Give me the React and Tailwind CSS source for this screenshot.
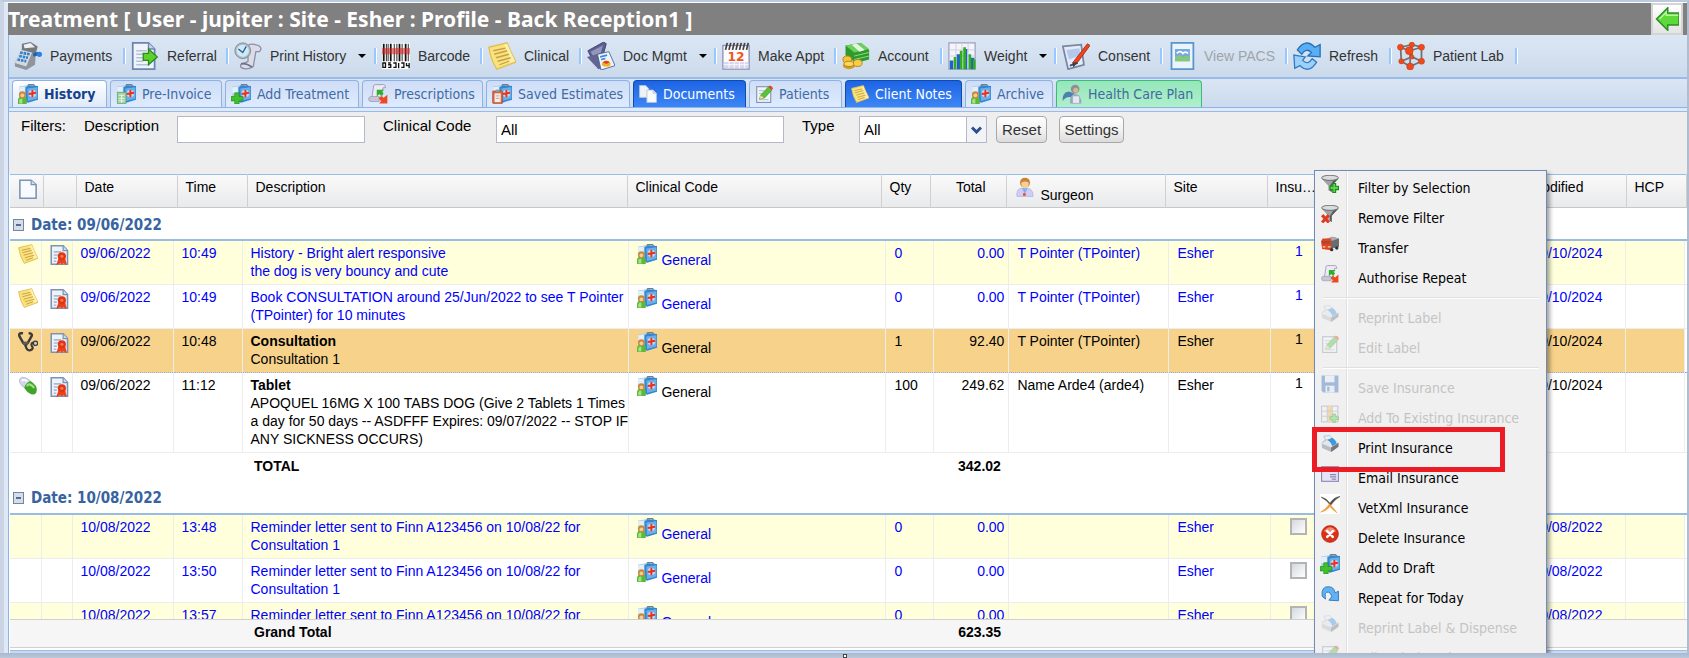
import { useState } from "react";

/* ─── Icons ─── */

function Svg({ size = 20, className = "", children }) {
  return (
    <svg
      xmlns="http://www.w3.org/2000/svg"
      viewBox="0 0 32 32"
      width={size}
      height={size}
      fill="none"
      aria-hidden="true"
      className={`shrink-0 ${className}`}
    >
      {children}
    </svg>
  );
}

// Blue first-aid case, used with a different overlay on most tabs
function CaseIcon({ size, className, overlay = "person" }) {
  return (
    <Svg size={size} className={className}>
      <path d="M15 4 L17 1 H25 L27 4" stroke="#6f7f92" strokeWidth="2" />
      <path d="M2 4 L15 2 V27 L2 26 Z" fill="#a9cdea" />
      <path d="M2 5 L11 4 V14 L2 15 Z" fill="#e3f0fa" />
      <path d="M12 5 L18 2 L32 3 V25 L16 30 L12 28 Z" fill="#3486cf" />
      <path d="M15 7 L31 5 V23 L16 27 Z" fill="#68b0ea" />
      <circle cx="23" cy="15" r="6" fill="#b8dbf6" />
      <path d="M23 9 V21 M17 16 L29 14" stroke="#ee2f1c" strokeWidth="3" />
      {overlay === "person" && (
        <>
          <path d="M0 32 V25 Q1 20 7 20 Q14 20 14 26 V32 Z" fill="#5cb83c" />
          <path d="M2 31 V26 Q4 22 7 24 V31 Z" fill="#a5e27c" />
          <circle cx="7" cy="17" r="5.5" fill="#c98a3c" />
          <circle cx="7" cy="18" r="3" fill="#f3cf96" />
        </>
      )}
      {overlay === "plus" && (
        <path
          d="M6 14 H13 V20 H19 V27 H13 V32 H6 V27 H0 V20 H6 Z"
          fill="#3fc02c" stroke="#1e8a18" strokeWidth="1"
        />
      )}
      {overlay === "sheet" && (
        <>
          <rect x="2" y="13" width="14" height="18" fill="#9fd0a0" stroke="#4f9a62" />
          <path d="M4 18 H14 M4 23 H14 M4 27 H14 M9 17 V30" stroke="#e9f8e8" strokeWidth="1.5" />
        </>
      )}
      {overlay === "clip" && (
        <>
          <rect x="1" y="11" width="16" height="20" rx="1" fill="#d9633f" stroke="#a8452a" />
          <rect x="4" y="15" width="10" height="14" fill="#f6ece6" />
          <rect x="6" y="9" width="6" height="4" fill="#8e98a6" />
          <path d="M6 19 H12 M6 23 H12" stroke="#b9a49a" strokeWidth="1.5" />
        </>
      )}
    </Svg>
  );
}

function NoteIcon({ size }) {
  return (
    <Svg size={size}>
      <path d="M1 6 L22 1 Q25 10 32 23 L10 31 Q3 20 1 6 Z" fill="#fbe27a" stroke="#dfbf58" strokeWidth="1.5" />
      <path d="M22 2 Q25 10 31 22 L25 24 Q24 12 18 3 Z" fill="#fdf0a8" />
      <path d="M6 10 L20 7 M7 14 L22 10 M9 18 L24 14 M11 22 L26 18 M13 26 L24 22" stroke="#c4a04c" strokeWidth="1.5" />
    </Svg>
  );
}

function PageIcon({ size }) {
  return (
    <Svg size={size}>
      <path d="M3 2 H21 L29 9 V31 H3 Z" fill="#f7fafe" stroke="#7d93b2" strokeWidth="2.5" />
      <path d="M21 2 V9 H29" fill="#cfdcec" stroke="#7d93b2" strokeWidth="2" />
    </Svg>
  );
}

function CertificateIcon({ size }) {
  return (
    <Svg size={size}>
      <path d="M2 1 H21 L28 9 V31 H2 Z" fill="#eef3fa" stroke="#7d93b2" strokeWidth="2.5" />
      <path d="M21 1 V9 H28" fill="#cfdcec" stroke="#7d93b2" strokeWidth="2" />
      <path d="M6 11 H18 M6 16 H13 M6 21 H11 M6 26 H10" stroke="#a9bad0" strokeWidth="2.5" />
      <path d="M14 20 L10 32 L17 29 L19 32 L21 29 L27 32 L24 20 Z" fill="#e8431c" />
      <circle cx="19" cy="18" r="6.5" fill="#e23514" />
      <circle cx="19" cy="18" r="2.5" fill="#ff7a4c" />
    </Svg>
  );
}

function StethoscopeIcon({ size }) {
  return (
    <Svg size={size}>
      <path
        d="M8 2 Q1 1 2 6 L8 17 Q12 22 16 17 L22 6 Q23 2 17 2"
        stroke="#3d3b38" strokeWidth="4"
      />
      <path d="M7 16 Q12 14 17 16 L14 24 H11 Z" fill="#5c5c5c" />
      <path d="M12 20 Q13 31 20 29 Q26 27 22 22 Q20 17 26 17" stroke="#3d3b38" strokeWidth="3.5" />
      <circle cx="28" cy="18" r="3.5" fill="#c8ccd0" stroke="#3d3b38" strokeWidth="2" />
    </Svg>
  );
}

function PillIcon({ size }) {
  return (
    <Svg size={size}>
      <path d="M3 11 Q0 3 8 2 Q13 2 20 8 L11 19 Q5 16 3 11 Z" fill="#d4d6ee" stroke="#a5a8c8" />
      <path d="M20 8 Q31 15 30 23 Q29 31 21 29 Q14 26 10 19 Q12 11 20 8 Z" fill="#3fa32c" />
      <path d="M15 15 Q19 11 25 18" stroke="#9ce27e" strokeWidth="3.5" strokeLinecap="round" />
      <path d="M7 7 Q10 5 14 8" stroke="#fff" strokeWidth="3" strokeLinecap="round" />
    </Svg>
  );
}

function DoctorIcon({ size }) {
  return (
    <Svg size={size}>
      <path d="M3 31 Q2 19 10 18 H20 Q29 19 29 31 Z" fill="#cfcff4" stroke="#a9a9dc" />
      <path d="M11 18 L16 27 L20 18 Z" fill="#7fb1ea" />
      <rect x="13" y="26" width="4" height="4" fill="#e8431c" />
      <circle cx="16" cy="9" r="8" fill="#c98432" />
      <path d="M10 9 Q16 5 22 9 Q22 18 16 18 Q10 17 10 9 Z" fill="#f6cf9c" />
    </Svg>
  );
}

function PrescriptionIcon({ size }) {
  return (
    <Svg size={size}>
      <path d="M9 3 Q9 1 12 1 H25 Q28 1 28 6 H24 L22 22 H6 Z" fill="#eceaf6" stroke="#9c9cb4" strokeWidth="1.5" />
      <path d="M1 24 Q1 20 5 20 H18 V28 H5 Q1 28 1 24 Z" fill="#c6c6d8" stroke="#8f8fa8" />
      <path d="M14 20 V9 H26 L22 12 L25 15 L21 19 L18 16 Z" fill="#2fae2a" />
      <path d="M31 17 V31 H18 L21 27 L17 23 L21 19 L25 22 Z" fill="#ee4a22" />
    </Svg>
  );
}

function EditIcon({ size }) {
  return (
    <Svg size={size}>
      <rect x="3" y="3" width="25" height="28" fill="#f2f5fa" stroke="#8494ac" strokeWidth="2" />
      <path d="M7 10 H17 M7 15 H14 M7 26 H24" stroke="#b9c6d8" strokeWidth="2" />
      <path d="M8 25 L10 18 L24 3 L30 9 L17 23 Z" fill="#58c23a" stroke="#36862a" />
      <path d="M8 25 L10 18 L16 23 Z" fill="#f2d9a0" />
      <path d="M24 4 L26 1 Q31 2 32 6 L30 9 Z" fill="#e0452c" />
    </Svg>
  );
}

function DocumentsIcon({ size }) {
  return (
    <Svg size={size}>
      <path d="M1 1 H12 L17 6 V22 H1 Z" fill="#eef3f8" stroke="#b7c4d4" strokeWidth="1.5" />
      <path d="M14 9 H25 L31 15 V31 H14 Z" fill="#f8fafc" stroke="#b7c4d4" strokeWidth="1.5" />
      <path d="M25 9 V15 H31" fill="#cdd9e6" stroke="#b7c4d4" />
    </Svg>
  );
}

function HealthPlanIcon({ size }) {
  return (
    <Svg size={size}>
      <path d="M1 27 Q0 13 11 12 L20 15 L14 21 Q7 19 1 27 Z" fill="#4f7fae" />
      <circle cx="21" cy="8" r="7" fill="#8c9099" />
      <circle cx="22" cy="10" r="4" fill="#d9b48c" />
      <path d="M13 31 Q12 17 21 16 Q31 17 31 31 Z" fill="#97a6be" />
      <path d="M17 19 H28 V31 H17 Z" fill="#e3e8f2" stroke="#9aa7bd" />
    </Svg>
  );
}

function PaymentsIcon({ size }) {
  return (
    <Svg size={size}>
      <path d="M1 24 L9 8 L25 11 L24 26 L14 32 L1 28 Z" fill="#8f959c" />
      <path d="M1 24 L9 8 L21 11 L14 28 Z" fill="#d5d9de" />
      <path d="M9 2 L19 0 L27 5 L25 13 L9 9 Z" fill="#74797f" />
      <path d="M11 3 L19 1 L24 6 L12 7 Z" fill="#eef0f2" />
      <path d="M7 12 L18 14 M6 16 L16 18 M4 20 L14 22" stroke="#2f7fd0" strokeWidth="3" strokeDasharray="3 1" />
      <path d="M22 15 L28 13" stroke="#1f62a8" strokeWidth="4" />
      <circle cx="29" cy="14" r="3" fill="#2b82dc" />
    </Svg>
  );
}

function ReferralIcon({ size }) {
  return (
    <Svg size={size}>
      <path d="M2 1 H20 L27 8 V31 H2 Z" fill="#f0f4fa" stroke="#6b84b4" strokeWidth="2" />
      <path d="M20 1 V8 H27" fill="#c9d6ea" stroke="#6b84b4" strokeWidth="1.5" />
      <path d="M6 10 H18 M6 14 H14 M6 18 H14 M6 22 H14 M6 26 H21" stroke="#b3c2d8" strokeWidth="1.5" />
      <path d="M14 13 H20 V8 L30 17 L20 26 V21 H14 Z" fill="#5cd02c" stroke="#2a8a1e" strokeWidth="1.5" />
    </Svg>
  );
}

function PrintHistoryIcon({ size }) {
  return (
    <Svg size={size}>
      <path d="M16 4 Q20 1 28 4 Q33 7 29 11 L25 11 L22 28 Q14 33 8 29 Q6 25 12 24 L16 22 Z" fill="#dcdce8" stroke="#8d8fa6" strokeWidth="1.5" />
      <path d="M8 25 Q14 24 21 29" stroke="#6f7188" strokeWidth="2" />
      <circle cx="10" cy="10" r="9" fill="#b4bac4" stroke="#7d838e" />
      <circle cx="10" cy="10" r="7" fill="#cdeafa" />
      <path d="M5 8 L10 12 L14 5" stroke="#2b5f8c" strokeWidth="1.5" />
    </Svg>
  );
}

function BarcodeIcon({ size }) {
  return (
    <Svg size={size}>
      <rect x="0" y="1" width="32" height="30" fill="#fff" />
      <path d="M2 2 V22 M10 2 V22 M20 2 V22 M27 2 V22" stroke="#111" strokeWidth="2" />
      <path d="M5 2 V22 M7 2 V22 M14 2 V22 M17 2 V22 M23 2 V22 M30 2 V22" stroke="#111" strokeWidth="1" />
      <rect x="0" y="7" width="32" height="7" fill="#e02020" opacity="0.55" />
      <path d="M1 24 H4 V29 H1 Z M7 24 H10 M7 26 H10 V29 H7 M13 24 H16 V29 H13 M19 24 V30 M22 24 H25 V29 H22 M28 24 V27 H31 M31 24 V30" stroke="#111" strokeWidth="1.5" />
    </Svg>
  );
}

function ScannerIcon({ size }) {
  return (
    <Svg size={size}>
      <path d="M1 10 L19 0 L22 2 L19 13 L5 18 Z" fill="#5c5f94" stroke="#3c3f6c" />
      <path d="M4 11 L18 4 L16 12 L7 16 Z" fill="#9496bc" />
      <path d="M0 17 L18 12 L31 25 L13 31 Z" fill="#62658f" />
      <path d="M12 14 L25 11 L32 27 L16 32 Z" fill="#eef4fc" stroke="#4d6090" />
      <path d="M15 17 L23 15 M16 20 L21 19" stroke="#3f8ad8" strokeWidth="2" />
      <ellipse cx="22" cy="25" rx="5" ry="3" fill="#f4b01e" />
      <path d="M22 25 L18 23 Q22 20 26 23 Z" fill="#e2411e" />
    </Svg>
  );
}

function CalendarIcon({ size }) {
  return (
    <Svg size={size}>
      <rect x="1" y="4" width="30" height="27" fill="#fdfdff" stroke="#8f8fb8" strokeWidth="1.5" />
      <path d="M2 23 H30 V30 H2 Z" fill="#d5d5ee" />
      <path d="M2 26 H30 M8 23 V30 M14 23 V30 M20 23 V30 M26 23 V30" stroke="#fff" />
      <path
        d="M4 9 L6 1 M8 9 L10 1 M12 9 L14 1 M16 9 L18 1 M20 9 L22 1 M24 9 L26 1 M28 9 L30 1"
        stroke="#444" strokeWidth="2"
      />
      <text x="16" y="22" textAnchor="middle" fill="#f0561c" fontSize="14" fontWeight="bold" fontFamily="DejaVu Sans, sans-serif">
        12
      </text>
    </Svg>
  );
}

function MoneyIcon({ size }) {
  return (
    <Svg size={size}>
      <path d="M4 4 L22 1 L31 9 V20 L16 24 L4 15 Z" fill="#2f9a2c" />
      <path d="M4 4 L22 1 L31 8 L14 12 Z" fill="#6ad25c" />
      <path d="M11 3 L17 2 L26 9 L20 11 Z" fill="#e6f4e0" />
      <path d="M14 16 L31 12 M14 20 L31 16" stroke="#9be08c" />
      <ellipse cx="8" cy="27" rx="7" ry="4" fill="#d79a1c" />
      <ellipse cx="6" cy="20" rx="5" ry="4" fill="#f2c437" stroke="#b57f14" />
      <ellipse cx="8" cy="25" rx="6" ry="3" fill="#f8d860" stroke="#b57f14" />
      <ellipse cx="18" cy="24" rx="5" ry="4" fill="#f6cc48" stroke="#b57f14" />
    </Svg>
  );
}

function ChartIcon({ size }) {
  return (
    <Svg size={size}>
      <rect x="1" y="1" width="30" height="30" fill="#f4f4fa" stroke="#a4a4c0" strokeWidth="1.5" />
      <path d="M1 9 H31 M1 16 H31 M1 23 H31 M9 1 V31 M16 1 V31 M23 1 V31" stroke="#cdcde0" />
      <path d="M4 31 V21 M12 31 V14 M20 31 V8 M28 31 V18" stroke="#1f62c8" strokeWidth="4" />
      <path d="M8 31 V17 M15 31 V10 M19 31 V6 M25 31 V14 M30 31 V20" stroke="#2fae1e" strokeWidth="3" />
    </Svg>
  );
}

function ConsentIcon({ size }) {
  return (
    <Svg size={size}>
      <path d="M1 5 L22 3 L25 26 L7 31 Z" fill="#e4ebf8" stroke="#7784a4" strokeWidth="2" />
      <path d="M5 9 L20 7 L21 15 L8 20 Z" fill="#b4c8ec" />
      <path d="M9 27 L18 24" stroke="#3c4460" strokeWidth="2" />
      <path d="M12 24 L29 2 L32 4 L18 23 Z" fill="#ee4422" stroke="#a82c14" />
      <path d="M12 24 L13 29 L18 23 Z" fill="#3c3c44" />
    </Svg>
  );
}

function PictureIcon({ size }) {
  return (
    <Svg size={size}>
      <rect x="4" y="1" width="25" height="30" fill="#eaf4fd" stroke="#5b93cc" strokeWidth="2" />
      <rect x="8" y="8" width="17" height="14" fill="#78a8e0" />
      <path d="M8 22 V17 Q13 13 17 17 Q21 15 25 17 V22 Z" fill="#86c878" />
      <path d="M10 13 Q14 9 17 13 Q20 10 23 13" stroke="#fff" strokeWidth="2" />
    </Svg>
  );
}

function RefreshIcon({ size }) {
  return (
    <Svg size={size}>
      <path d="M5 9 Q14 -5 25 6 L31 3 V17 L17 16 L21 12 Q15 6 10 14 Z" fill="#5aaef4" stroke="#2670b8" strokeWidth="1.5" />
      <path d="M27 23 Q18 37 8 27 L2 30 L1 15 L14 17 L11 21 Q17 27 22 19 Z" fill="#9cd0f8" stroke="#2f7cc4" strokeWidth="1.5" />
    </Svg>
  );
}

function LabIcon({ size }) {
  return (
    <Svg size={size}>
      <path
        d="M4 6 L17 3 L28 6 V22 L15 28 L5 22 Z M4 6 L14 10 L28 6 M15 10 V28 M17 3 V17 L5 22 M17 17 L28 22"
        stroke="#6c7278" strokeWidth="2"
      />
      <g fill="#f04a1c" stroke="#b8300c" strokeWidth="0.5">
        <circle cx="4" cy="6" r="3.5" /><circle cx="17" cy="3" r="3" /><circle cx="28" cy="6" r="3.5" />
        <circle cx="14" cy="10" r="4.5" /><circle cx="17" cy="17" r="2.5" /><circle cx="5" cy="22" r="3" />
        <circle cx="28" cy="22" r="3.5" /><circle cx="15" cy="28" r="4" />
      </g>
    </Svg>
  );
}

function BackArrowIcon({ size }) {
  return (
    <Svg size={size}>
      <path d="M2 16 L17 1 V8 H32 V24 H17 V31 Z" fill="#5fd83a" stroke="#2c8f24" strokeWidth="2" />
      <path d="M6 16 L15 7 V11 H31" stroke="#b6f59c" strokeWidth="2" />
    </Svg>
  );
}

function FilterIcon({ size, remove }) {
  return (
    <Svg size={size}>
      <path d="M1 6 L13 19 V27 L19 30 V19 L31 6 Z" fill="#a0a3a6" />
      <path d="M16 19 L22 10 L31 6 L19 19 V30 L16 28 Z" fill="#55585b" />
      <ellipse cx="16" cy="5" rx="15" ry="4.5" fill="#d9dbdd" stroke="#606366" strokeWidth="1.5" />
      {remove ? (
        <path d="M2 18 L14 31 M14 18 L2 31" stroke="#e23a1e" strokeWidth="5.5" />
      ) : (
        <path d="M21 15 H26 V20 H31 V26 H26 V31 H21 V26 H16 V20 H21 Z" fill="#58d844" stroke="#1c8a1a" strokeWidth="2" />
      )}
    </Svg>
  );
}

function TruckIcon({ size }) {
  return (
    <Svg size={size}>
      <path d="M10 7 L20 3 L32 6 V21 L16 25 Z" fill="#6a6d70" />
      <path d="M10 7 L20 3 L32 6 L20 10 Z" fill="#a9acb0" />
      <path d="M0 11 L3 6 H18 V27 L2 25 Z" fill="#e2431f" />
      <path d="M2 11 H16 V15 H2 Z" fill="#9f4a38" />
      <path d="M3 21 H8 M12 21 H17" stroke="#fbd6a0" strokeWidth="2" />
      <circle cx="19" cy="26" r="3" fill="#333" /><circle cx="28" cy="23" r="3" fill="#333" />
    </Svg>
  );
}

function PrinterIcon({ size }) {
  return (
    <Svg size={size}>
      <path d="M5 2 L16 1 L23 9 L10 14 Z" fill="#e8f2fc" stroke="#92a8c0" />
      <path d="M1 14 Q6 7 14 7 L31 13 V21 L18 30 L2 23 Z" fill="#b9bdc3" />
      <path d="M1 15 L13 7 L31 13 L18 22 Z" fill="#e4e6e9" />
      <path d="M11 9 L20 5 Q26 8 28 15 L20 20 Q18 12 11 9 Z" fill="#3f97dc" />
      <path d="M18 22 L31 14 V21 L18 30 Z" fill="#74787e" />
    </Svg>
  );
}

function SaveIcon({ size }) {
  return (
    <Svg size={size}>
      <path d="M1 1 H31 V31 H4 L1 28 Z" fill="#2f6cb8" />
      <rect x="7" y="1" width="17" height="12" fill="#e4edf7" />
      <rect x="8" y="19" width="16" height="12" fill="#dfe8f2" />
      <rect x="11" y="21" width="4" height="8" fill="#2f6cb8" />
    </Svg>
  );
}

function TableAddIcon({ size }) {
  return (
    <Svg size={size}>
      <rect x="1" y="2" width="29" height="28" fill="#f4f4f8" stroke="#8f95a4" strokeWidth="2" />
      <rect x="11" y="2" width="9" height="28" fill="#f2b84c" />
      <path d="M1 11 H30 M1 20 H30 M11 2 V30 M20 2 V30" stroke="#8f95a4" strokeWidth="1.5" />
      <path d="M21 16 H26 V21 H31 V26 H26 V31 H21 V26 H16 V21 H21 Z" fill="#58d844" stroke="#1c8a1a" strokeWidth="1.5" />
    </Svg>
  );
}

function MailIcon({ size }) {
  return (
    <Svg size={size}>
      <rect x="1" y="3" width="30" height="26" fill="#e6e3f8" stroke="#8d88b8" strokeWidth="2" />
      <path d="M20 12 L25 6 L29 12 Z" fill="#2fae2a" />
      <path d="M16 17 H27 M16 21 H27 M19 25 H27" stroke="#8d88a8" strokeWidth="2" />
    </Svg>
  );
}

function VetXmlIcon({ size }) {
  return (
    <Svg size={size}>
      <rect width="32" height="32" fill="#fff" />
      <path d="M2 5 Q10 6 16 15 Q22 5 32 4 Q24 8 17 18 Q10 9 2 5 Z" fill="#4c4a44" stroke="#4c4a44" />
      <path d="M1 29 Q9 25 15 16 Q20 20 27 30 Q20 25 16 20 Q9 28 1 29 Z" fill="#f09a34" stroke="#f09a34" />
    </Svg>
  );
}

function DeleteIcon({ size }) {
  return (
    <Svg size={size}>
      <circle cx="16" cy="16" r="15" fill="#dc3018" stroke="#a41c0c" />
      <path d="M5 11 Q16 -3 27 11 Q16 16 5 11 Z" fill="#f48a74" />
      <path d="M11 11 L21 21 M21 11 L11 21" stroke="#fff" strokeWidth="4.5" strokeLinecap="round" />
    </Svg>
  );
}

function RepeatIcon({ size }) {
  return (
    <Svg size={size}>
      <path d="M2 20 Q0 2 14 3 Q24 4 25 14 L31 11 V28 L14 27 L19 21 Q17 11 10 13 Q6 15 8 25 Z" fill="#62b2f2" stroke="#2670b8" strokeWidth="1.5" />
    </Svg>
  );
}

/* ─── Data ─── */

const TOOLS = [
  { label: "Payments", icon: PaymentsIcon, width: "w-[117px]" },
  { label: "Referral", icon: ReferralIcon, width: "w-[103px]" },
  { label: "Print History", icon: PrintHistoryIcon, width: "w-[148px]", menu: true },
  { label: "Barcode", icon: BarcodeIcon, width: "w-[106px]" },
  { label: "Clinical", icon: NoteIcon, width: "w-[99px]" },
  { label: "Doc Mgmt", icon: ScannerIcon, width: "w-[135px]", menu: true },
  { label: "Make Appt", icon: CalendarIcon, width: "w-[120px]" },
  { label: "Account", icon: MoneyIcon, width: "w-[106px]" },
  { label: "Weight", icon: ChartIcon, width: "w-[114px]", menu: true },
  { label: "Consent", icon: ConsentIcon, width: "w-[106px]" },
  { label: "View PACS", icon: PictureIcon, width: "w-[125px]", disabled: true },
  { label: "Refresh", icon: RefreshIcon, width: "w-[104px]" },
  { label: "Patient Lab", icon: LabIcon, width: "w-[126px]" },
];

const TABS = [
  { label: "History", icon: <CaseIcon size={20} />, width: "w-[95px]" },
  { label: "Pre-Invoice", icon: <CaseIcon size={20} overlay="sheet" />, width: "w-[112px]" },
  { label: "Add Treatment", icon: <CaseIcon size={20} overlay="plus" />, width: "w-[134px]" },
  { label: "Prescriptions", icon: <PrescriptionIcon size={20} />, width: "w-[121px]" },
  { label: "Saved Estimates", icon: <CaseIcon size={20} overlay="clip" />, width: "w-[144px]" },
  { label: "Documents", icon: <DocumentsIcon size={18} />, width: "w-[113px]", tone: "blue" },
  { label: "Patients", icon: <EditIcon size={18} />, width: "w-[93px]" },
  { label: "Client Notes", icon: <NoteIcon size={18} />, width: "w-[117px]", tone: "blue" },
  { label: "Archive", icon: <CaseIcon size={20} />, width: "w-[88px]" },
  { label: "Health Care Plan", icon: <HealthPlanIcon size={20} />, width: "w-[146px]", tone: "green" },
];

const TAB_TONES = {
  active: "border-[#8db2e3] bg-linear-to-b from-white to-[#dfe9f7] font-bold text-[#15428b]",
  plain: "border-[#8db2e3] bg-linear-to-b from-[#cfdef6] to-[#deebff] text-[#416aa3]",
  blue: "border-[#0f4cae] bg-linear-to-b from-[#1c64e4] to-[#3d86f6] text-white",
  green: "border-[#3dba78] bg-linear-to-b from-[#96e6ba] to-[#aef0cb] text-[#416aa3]",
};

const GROUPS = [
  {
    date: "09/06/2022",
    total: "342.02",
    rows: [
      { type: "note", time: "10:49", text: "History - Bright alert responsive\nthe dog is very bouncy and cute", qty: "0", total: "0.00", surgeon: "T Pointer (TPointer)", modified: "09/10/2024", blue: true },
      { type: "note", time: "10:49", text: "Book CONSULTATION around 25/Jun/2022 to see T Pointer\n(TPointer) for 10 minutes", qty: "0", total: "0.00", surgeon: "T Pointer (TPointer)", modified: "09/10/2024", blue: true },
      { type: "consult", time: "10:48", title: "Consultation", text: "Consultation 1", qty: "1", total: "92.40", surgeon: "T Pointer (TPointer)", modified: "09/10/2024", selected: true },
      { type: "tablet", time: "11:12", title: "Tablet", text: "APOQUEL 16MG X 100 TABS DOG (Give 2 Tablets 1 Times\na day for 50 days -- ASDFFF Expires: 09/07/2022 -- STOP IF\nANY SICKNESS OCCURS)", qty: "100", total: "249.62", surgeon: "Name Arde4 (arde4)", modified: "09/10/2024" },
    ],
  },
  {
    date: "10/08/2022",
    rows: [
      { time: "13:48", text: "Reminder letter sent to Finn A123456 on 10/08/22 for\nConsultation 1", qty: "0", total: "0.00", modified: "10/08/2022", blue: true },
      { time: "13:50", text: "Reminder letter sent to Finn A123456 on 10/08/22 for\nConsultation 1", qty: "0", total: "0.00", modified: "10/08/2022", blue: true },
      { time: "13:57", text: "Reminder letter sent to Finn A123456 on 10/08/22 for\nConsultation 1", qty: "0", total: "0.00", modified: "10/08/2022", blue: true },
    ],
  },
];

const ROW_ICONS = { note: NoteIcon, consult: StethoscopeIcon, tablet: PillIcon };

const MENU = [
  { label: "Filter by Selection", icon: <FilterIcon size={18} /> },
  { label: "Remove Filter", icon: <FilterIcon size={18} remove /> },
  { label: "Transfer", icon: <TruckIcon size={18} /> },
  { label: "Authorise Repeat", icon: <PrescriptionIcon size={18} /> },
  null,
  { label: "Reprint Label", icon: <PrinterIcon size={18} />, disabled: true },
  { label: "Edit Label", icon: <EditIcon size={18} />, disabled: true },
  null,
  { label: "Save Insurance", icon: <SaveIcon size={18} />, disabled: true },
  { label: "Add To Existing Insurance", icon: <TableAddIcon size={18} />, disabled: true },
  { label: "Print Insurance", icon: <PrinterIcon size={18} />, marked: true },
  { label: "Email Insurance", icon: <MailIcon size={18} /> },
  { label: "VetXml Insurance", icon: <VetXmlIcon size={20} /> },
  { label: "Delete Insurance", icon: <DeleteIcon size={18} /> },
  { label: "Add to Draft", icon: <CaseIcon size={20} overlay="plus" /> },
  { label: "Repeat for Today", icon: <RepeatIcon size={18} /> },
  { label: "Reprint Label & Dispense", icon: <PrinterIcon size={18} />, disabled: true },
  { label: "Edit Label & Dispense", icon: <EditIcon size={18} />, disabled: true },
];

/* ─── Toolbar and tabs ─── */

function Toolbar() {
  return (
    <div className="flex h-[42px] items-center bg-linear-to-b from-[#dce7f4] to-[#cbdaec]">
      {TOOLS.map(({ label, icon: Icon, width, menu, disabled }) => (
        <div key={label} className={`flex shrink-0 items-center ${width}`}>
          <button
            type="button"
            disabled={disabled}
            className={`flex flex-1 items-center gap-2 pl-[5px] whitespace-nowrap ${disabled ? "text-[#a0a4aa]" : "text-[#333]"}`}
          >
            <Icon size={28} />
            {label}
            {menu && <span className="ml-1 border-x-4 border-t-4 border-x-transparent border-t-black" />}
          </button>
          <span className="h-4 w-[3px] border-l-2 border-[#98c8ff] bg-white" />
        </div>
      ))}
    </div>
  );
}

function Tabs() {
  const [active, setActive] = useState("History");

  return (
    <div className="border-t-2 border-[#99bbe8]">
      <div
        role="tablist"
        className="flex h-[29px] items-end gap-[3px] border-b border-[#8db2e3] bg-linear-to-b from-[#dbe6f4] to-[#cbdaee] pl-[3px]"
      >
        {TABS.map(({ label, icon, width, tone }) => {
          const isActive = label === active;
          return (
            <button
              key={label}
              role="tab"
              type="button"
              aria-selected={isActive}
              onClick={() => setActive(label)}
              className={`flex h-[27px] shrink-0 items-center gap-1.5 rounded-t border border-b-0 pl-[5px] whitespace-nowrap font-['DejaVu_Sans_Condensed','Noto_Sans',sans-serif] ${width} ${TAB_TONES[isActive ? "active" : tone || "plain"]}`}
            >
              {icon}
              {label}
            </button>
          );
        })}
      </div>
      <div className="h-1 border-b border-[#99bbe8] bg-[#dfe9f7]" />
    </div>
  );
}

function Filters() {
  const field = "h-[27px] border border-[#b5b8c8] bg-white px-1 text-[15px] text-black";
  const button =
    "h-[27px] rounded border border-[#a8a8a8] bg-linear-to-b from-white via-[#f2f2f2] to-[#dcdcdc] text-[15px] text-[#333]";

  return (
    <form className="flex h-[62px] items-start bg-[#eee] pt-1 pl-3 text-[15px] leading-5">
      <span className="w-[63px]">Filters:</span>
      <label htmlFor="description" className="w-[93px]">Description</label>
      <input id="description" className={`w-[188px] ${field}`} />
      <label htmlFor="code" className="ml-[18px] w-[113px]">Clinical Code</label>
      <input id="code" defaultValue="All" className={`w-72 ${field}`} />
      <label htmlFor="type" className="ml-[18px] w-[57px]">Type</label>
      <span className="relative flex">
        <select id="type" className={`w-32 appearance-none ${field}`}>
          <option>All</option>
        </select>
        <span className="pointer-events-none absolute inset-y-0 right-0 flex w-[21px] items-center justify-center border border-[#b5b8c8] bg-[#f2f3f6]">
          <svg width="11" height="8" viewBox="0 0 11 8" fill="none">
            <path d="M1 1.5 L5.5 6 L10 1.5" stroke="#2f4f8c" strokeWidth="3" />
          </svg>
        </span>
      </span>
      <button type="button" className={`ml-[9px] w-[51px] ${button}`}>Reset</button>
      <button type="button" className={`ml-3 w-[65px] ${button}`}>Settings</button>
    </form>
  );
}

/* ─── Grid ─── */

function GridHeader() {
  const cell = "border-r border-[#d0d0d0] pl-2 pt-0.5 text-left align-top font-normal";

  return (
    <table className="w-full table-fixed border-t border-[#99bbe8] leading-[20px]">
      <thead>
        <tr className="h-[33px] border-b border-[#c8c8c8] bg-linear-to-b from-[#fafafa] to-[#e9eaec]">
          <th scope="col" className="w-[33px] border-r border-[#d0d0d0] pt-1 pl-2 align-top" aria-label="Type"><PageIcon size={20} /></th>
          <th scope="col" className={`w-[33px] ${cell}`} aria-label="Certificate" />
          <th scope="col" className={`w-[101px] ${cell}`}>Date</th>
          <th scope="col" className={`w-[70px] ${cell}`}>Time</th>
          <th scope="col" className={cell}>Description</th>
          <th scope="col" className={`w-[254px] ${cell}`}>Clinical Code</th>
          <th scope="col" className={`w-[49px] ${cell}`}>Qty</th>
          <th scope="col" className="w-[76px] border-r border-[#d0d0d0] pt-0.5 pr-5 text-right align-top font-normal">Total</th>
          <th scope="col" className={`w-[159px] ${cell}`}>
            <span className="flex items-start gap-1.5">
              <DoctorIcon size={20} />
              <span className="pt-2">Surgeon</span>
            </span>
          </th>
          <th scope="col" className={`w-[102px] ${cell}`}>Site</th>
          <th scope="col" className={`w-[53px] ${cell}`}>Insu…</th>
          <th scope="col" className={`w-[202px] ${cell}`} />
          <th scope="col" className={`w-[104px] ${cell}`}>Modified</th>
          <th scope="col" className={`w-[60px] ${cell}`}>HCP</th>
          <th className="w-px" />
        </tr>
      </thead>
    </table>
  );
}

function GridRow({ row, date, striped }) {
  const Icon = ROW_ICONS[row.type];
  const cell = "border-r border-[#ededed] pl-2 pt-[3px] align-top";
  const background = row.selected ? "bg-[#f6d28b]" : striped ? "bg-[#ffffdc]" : "bg-white";
  const line = row.selected ? "border-y border-dotted border-[#8fb0e0]" : "border-b border-[#ededed]";

  return (
    <tr className={`h-11 ${background} ${line} ${row.blue ? "text-[#0000ff]" : "text-black"}`}>
      <td className={cell}>{Icon && <Icon size={20} />}</td>
      <td className="border-r border-[#ededed] pt-1 pl-2 align-top">
        {Icon && <CertificateIcon size={20} />}
      </td>
      <td className={cell}>{date}</td>
      <td className={cell}>{row.time}</td>
      <td className="border-r border-[#ededed] pt-[3px] pb-1 pl-2 align-top whitespace-pre">
        {row.title && <strong className="block">{row.title}</strong>}
        {row.text}
      </td>
      <td className={cell}>
        <span className="flex gap-1">
          <CaseIcon size={20} />
          <span className="pt-[7px]">General</span>
        </span>
      </td>
      <td className={cell}>{row.qty}</td>
      <td className="border-r border-[#ededed] pt-[3px] pr-1 text-right align-top">{row.total}</td>
      <td className={cell}>{row.surgeon}</td>
      <td className={cell}>Esher</td>
      <td className="border-r border-[#ededed] pt-0.5 pl-1 text-center align-top leading-4">
        {row.type ? (
          "1"
        ) : (
          <input
            type="checkbox"
            aria-label={`Insurance ${row.time}`}
            className="mt-px h-[17px] w-[17px] appearance-none border-2 border-[#b4b4b4] bg-linear-to-br from-[#d4d8de] to-white"
          />
        )}
      </td>
      <td className={cell} />
      <td className={cell}>{row.modified}</td>
      <td className={cell} />
      <td className="bg-white" />
    </tr>
  );
}

function GridBody() {
  return (
    <table className="w-full table-fixed">
      <colgroup>
        <col className="w-[31px]" />
        <col className="w-[31px]" />
        <col className="w-[101px]" />
        <col className="w-[69px]" />
        <col />
        <col className="w-[257px]" />
        <col className="w-[48px]" />
        <col className="w-[75px]" />
        <col className="w-[160px]" />
        <col className="w-[102px]" />
        <col className="w-[52px]" />
        <col className="w-[201px]" />
        <col className="w-[102px]" />
        <col className="w-[59px]" />
        <col className="w-[2px]" />
      </colgroup>
      {GROUPS.map((group) => (
        <tbody key={group.date}>
          <tr className="h-8 border-b-2 border-[#99bbe8]">
            <th
              colSpan={15}
              scope="rowgroup"
              className="pt-0.5 pl-[3px] text-left text-[15px] font-['DejaVu_Sans_Condensed','Noto_Sans',sans-serif] font-bold text-[#3764a0]"
            >
              <button type="button" className="flex items-center gap-[7px]">
                <svg width="11" height="12" viewBox="0 0 11 12" fill="none" aria-hidden="true">
                  <rect x="0.5" y="0.5" width="10" height="11" fill="#d5dde8" stroke="#6f86a8" />
                  <path d="M3 6 H8" stroke="#2c4670" strokeWidth="1.5" />
                </svg>
                Date: {group.date}
              </button>
            </th>
          </tr>
          {group.rows.map((row, i) => (
            <GridRow key={row.time + i} row={row} date={group.date} striped={i % 2 === 0} />
          ))}
          {group.total && (
            <tr className="h-[29px] font-bold">
              <td colSpan={4} />
              <td colSpan={2} className="pb-0.5 pl-3">TOTAL</td>
              <td colSpan={2} className="pr-2 pb-0.5 text-right">{group.total}</td>
              <td colSpan={7} />
            </tr>
          )}
        </tbody>
      ))}
    </table>
  );
}

/* ─── Context menu ─── */

function ContextMenu() {
  return (
    <div
      role="menu"
      className="absolute top-[168px] right-[140px] w-[233px] border border-[#718bb7] bg-[#f0f0f0] pt-0.5 shadow-[3px_3px_4px_rgba(0,0,0,0.35)] font-['DejaVu_Sans_Condensed','Noto_Sans',sans-serif]"
    >
      {/* Gutter line between icons and labels */}
      <div className="absolute inset-y-0 left-[31px] w-0.5 border-r border-l border-r-white border-l-[#e0e0e0]" />
      {MENU.map((item, i) =>
        item ? (
          <div key={item.label} className="relative">
            <button
              type="button"
              role="menuitem"
              disabled={item.disabled}
              className={`flex h-[30px] w-full pl-[5px] text-left whitespace-nowrap ${item.disabled ? "text-[#c4c4c4]" : "text-black"}`}
            >
              <span className={`flex h-[22px] w-5 items-center justify-center ${item.disabled ? "opacity-40" : ""}`}>
                {item.icon}
              </span>
              <span className="pl-[18px] leading-[30px]">{item.label}</span>
            </button>
            {item.marked && (
              <div className="pointer-events-none absolute -top-[6px] -left-[3px] z-10 h-[45px] w-[193px] border-[5px] border-[#ed1c24]" />
            )}
          </div>
        ) : (
          <div key={i} className="relative flex h-2.5 items-center pr-[7px] pl-2">
            <div className="h-0.5 flex-1 border-t border-b border-t-[#e0e0e0] border-b-white" />
          </div>
        )
      )}
    </div>
  );
}

export default function App() {
  return (
    <div className="flex h-screen flex-col overflow-hidden bg-[#b8c5d9] font-['Liberation_Sans',Arial,sans-serif] text-sm leading-[18px] text-black">
      <div className="relative flex min-h-0 flex-1 flex-col overflow-hidden border-t-2 border-r-2 border-l-4 border-t-[#bccade] border-r-[#b0bdd0] border-l-[#cad4e5]">
        <div className="flex min-h-0 flex-1 flex-col border-t border-l-4 border-t-white border-l-[#dfe8f5]">
          {/* Title */}
          <header className="flex h-8 shrink-0 items-center justify-between bg-[#808080] pr-1">
            <h1 className="text-[21px] font-bold whitespace-nowrap text-white font-['Noto_Sans',sans-serif]">
              Treatment [ User - jupiter : Site - Esher : Profile - Back Reception1 ]
            </h1>
            <button
              type="button"
              aria-label="Back"
              className="flex h-8 w-8 items-center justify-center border-2 border-[#d4d4d4] bg-linear-to-b from-white to-[#e4e4e4]"
            >
              <BackArrowIcon size={24} />
            </button>
          </header>

          <div className="flex min-h-0 flex-1 flex-col border-l border-[#8db2e3]">
            <Toolbar />
            <Tabs />
            <Filters />

            {/* Treatment grid */}
            <main className="flex min-h-0 flex-1 flex-col bg-white pl-px">
              <GridHeader />
              <div className="min-h-0 flex-1 overflow-hidden">
                <GridBody />
              </div>
              <footer className="flex h-[29px] shrink-0 items-center border-y border-[#d0d0d0] bg-[#f6f6f6] pb-[3px] font-bold">
                <span className="flex-1 pl-[244px]">Grand Total</span>
                <span className="pr-[686px]">623.35</span>
              </footer>
              <div className="h-[5px] shrink-0 border-b-2 border-[#c9daf0] pt-0.5">
                <div className="border-t border-[#99bbe8]" />
              </div>
            </main>
          </div>
        </div>
        <ContextMenu />
      </div>

      {/* Splitter */}
      <div className="flex h-[5px] shrink-0 items-end justify-center bg-linear-to-b from-[#a9b8cd] to-[#bcc8da]">
        <span className="h-1 w-1 border border-[#444] bg-white" />
      </div>
    </div>
  );
}
